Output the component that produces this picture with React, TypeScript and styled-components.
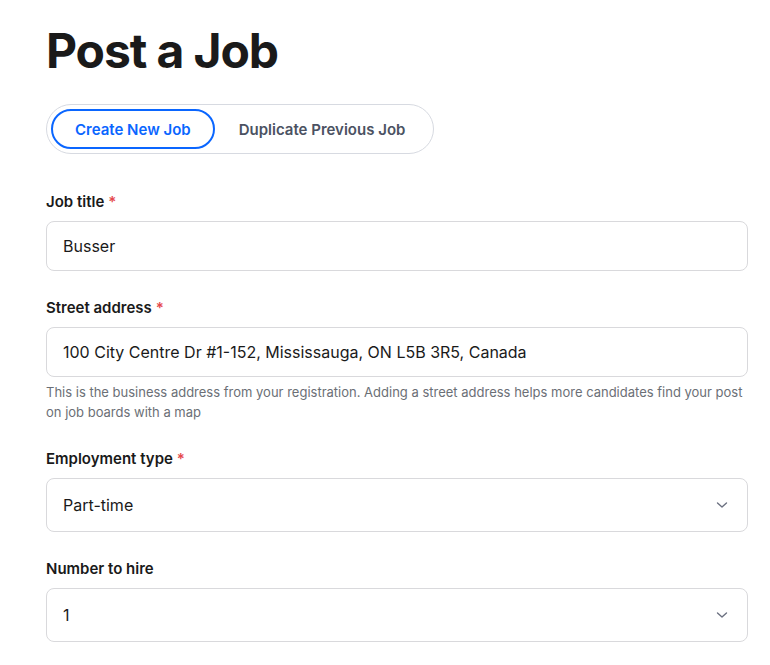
import React from 'react';
import styled, { createGlobalStyle } from 'styled-components';

const GlobalStyle = createGlobalStyle`
    body {
        margin: 0;
        background: #ffffff;
        font-family: Inter, "Noto Sans", "Liberation Sans", sans-serif;
        color: #1a1a1a;
    }
`;

const Page = styled.div`
    padding: 22px 22px 0 46px;
    width: 702px;
`;

const Title = styled.h1`
    margin: 0;
    font-size: 48px;
    line-height: 58px;
    font-weight: 700;
    letter-spacing: -1.1px;
    color: #1a1a1a;
`;

const Toggle = styled.div`
    display: inline-flex;
    align-items: center;
    margin-top: 24px;
    padding: 4px;
    border: 1px solid #d7dae1;
    border-radius: 26px;
`;

const ToggleButton = styled.button<{ active?: boolean }>`
    height: 40px;
    padding: 0 22px;
    border-radius: 20px;
    border: 2px solid ${p => (p.active ? '#0a66ff' : 'transparent')};
    background: #ffffff;
    color: ${p => (p.active ? '#0a66ff' : '#4b5262')};
    font-family: inherit;
    font-size: 15px;
    font-weight: 600;
    cursor: pointer;
`;

const Form = styled.div`
    display: flex;
    flex-direction: column;
    gap: 27px;
    margin-top: 38px;
`;

const Field = styled.div`
    display: flex;
    flex-direction: column;
`;

const Label = styled.label`
    font-size: 15px;
    line-height: 20px;
    font-weight: 600;
    color: #1a1a1a;
    margin-bottom: 9px;
`;

const Required = styled.span`
    color: #e5484d;
    margin-left: 4px;
`;

const Input = styled.input`
    box-sizing: border-box;
    height: 50px;
    width: 100%;
    padding: 0 16px;
    border: 1px solid #d9d9dc;
    border-radius: 8px;
    font-family: inherit;
    font-size: 16px;
    color: #1a1a1a;
    background: #ffffff;
    outline: none;
`;

const SelectBox = styled.div`
    box-sizing: border-box;
    height: 54px;
    display: flex;
    align-items: center;
    justify-content: space-between;
    padding: 0 19px 0 16px;
    border: 1px solid #d9d9dc;
    border-radius: 8px;
    font-size: 16px;
    color: #1a1a1a;
`;

const Help = styled.p`
    margin: 5px 0 0;
    font-size: 13px;
    line-height: 20px;
    color: #6b6f76;
`;

const Chevron = () => (
    <svg width="12" height="12" viewBox="0 0 12 12" fill="none">
        <path d="M1.5 4 L6 8 L10.5 4" stroke="#6b7080" strokeWidth="1.4" strokeLinecap="round" strokeLinejoin="round" />
    </svg>
);

const App = () => {
    return (
        <>
            <GlobalStyle />
            <Page>
                <Title>Post a Job</Title>
                <Toggle>
                    <ToggleButton active>Create New Job</ToggleButton>
                    <ToggleButton>Duplicate Previous Job</ToggleButton>
                </Toggle>
                <Form>
                    <Field>
                        <Label>Job title<Required>*</Required></Label>
                        <Input defaultValue="Busser" />
                    </Field>
                    <Field>
                        <Label>Street address<Required>*</Required></Label>
                        <Input defaultValue="100 City Centre Dr #1-152, Mississauga, ON L5B 3R5, Canada" />
                        <Help>
                            This is the business address from your registration. Adding a street address helps more candidates find your post on job boards with a map
                        </Help>
                    </Field>
                    <Field>
                        <Label>Employment type<Required>*</Required></Label>
                        <SelectBox>
                            <span>Part-time</span>
                            <Chevron />
                        </SelectBox>
                    </Field>
                    <Field>
                        <Label>Number to hire</Label>
                        <SelectBox>
                            <span>1</span>
                            <Chevron />
                        </SelectBox>
                    </Field>
                </Form>
            </Page>
        </>
    );
};

export default App;
